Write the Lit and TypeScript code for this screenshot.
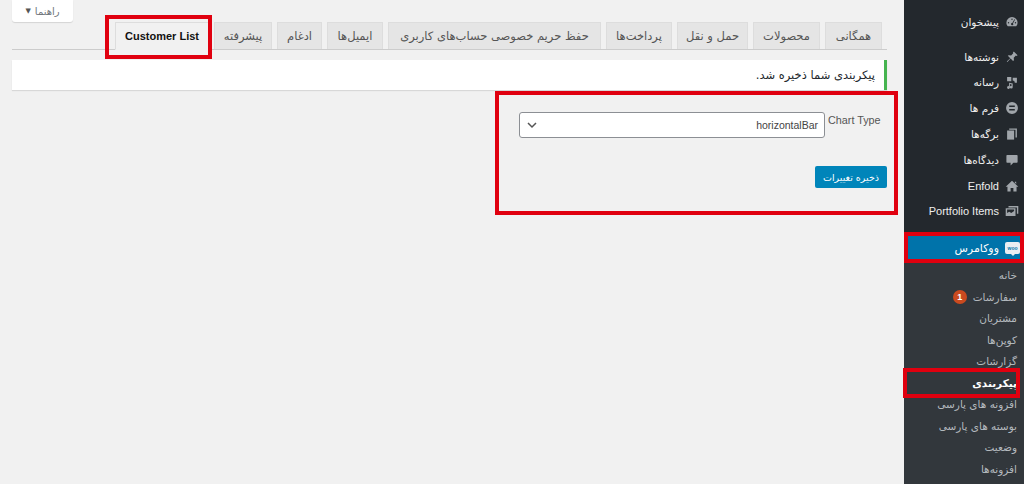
import { LitElement, html, css, svg } from "lit";
import { customElement } from "lit/decorators.js";

const icons: Record<string, unknown> = {
  gauge: svg`<path d="M10 3a8 8 0 0 0-8 8c0 2 .7 3.800 2 5h12a8 8 0 0 0 2-5 8 8 0 0 0-8-8zm0 2a1 1 0 1 1 0 2 1 1 0 0 1 0-2zM5 10a1 1 0 1 1 0 2 1 1 0 0 1 0-2zm10 0a1 1 0 1 1 0 2 1 1 0 0 1 0-2zm-1.500-4 .9.500-3 5.500a1.600 1.600 0 1 1-1-.5z"/>`,
  pin: svg`<path d="M12.500 2 18 7.500l-1.500 1-1-.5-3 3 .3 3.500-1.300 1.300L8 12.300l-4.500 5-1-1 5-4.500-3.500-3.500L5.300 7.500 8.800 7.800l3-3-.5-1z"/>`,
  media: svg`<path d="M3 3h6v6H3zM11 4h6v7h-3a3 3 0 0 0-3-3zM6 11l5 1v5.500a2 2 0 1 1-1.500-2V13.500L7 13v5a2 2 0 1 1-1.500-2z"/>`,
  form: svg`<path fill-rule="evenodd" d="M10 1.500a8.500 8.500 0 1 1 0 17 8.500 8.500 0 0 1 0-17zM6 6.500v2h8v-2zm0 5v2h8v-2z"/>`,
  pages: svg`<path d="M6 2h11v13h-2V4H6z"/><path d="M3 5h10v13H3z"/>`,
  comment: svg`<path d="M3 3h14a1 1 0 0 1 1 1v9a1 1 0 0 1-1 1h-5l-4 4v-4H3a1 1 0 0 1-1-1V4a1 1 0 0 1 1-1z"/>`,
  home: svg`<path d="M10 2.500 19 11h-2.500v7H12v-5H8v5H3.500v-7H1zM14 4h2v3l-2-2z"/>`,
  portfolio: svg`<path fill-rule="evenodd" d="M5 3h14v11h-2V5H5zM1 6h14v11H1zm2 2v5l3-2 3 2 4-3V8z"/>`,
};

const topMenu = [
  { label: "پیشخوان", icon: "gauge", cls: "first" },
  { label: "نوشته‌ها", icon: "pin", cls: "gap" },
  { label: "رسانه", icon: "media", cls: "" },
  { label: "فرم ها", icon: "form", cls: "" },
  { label: "برگه‌ها", icon: "pages", cls: "" },
  { label: "دیدگاه‌ها", icon: "comment", cls: "" },
  { label: "Enfold", icon: "home", cls: "" },
  { label: "Portfolio Items", icon: "portfolio", cls: "" },
];

const subMenu = [
  "خانه", "سفارشات", "مشتریان", "کوپن‌ها", "گزارشات", "پیکربندی",
  "افزونه های پارسی", "بوسته های پارسی", "وضعیت", "افزونه‌ها",
];

const tabs = [
  { t: "همگانی", w: 57 },
  { t: "محصولات", w: 67 },
  { t: "حمل و نقل", w: 71 },
  { t: "پرداخت‌ها", w: 66 },
  { t: "حفظ حریم خصوصی حساب‌های کاربری", w: 213 },
  { t: "ایمیل‌ها", w: 56 },
  { t: "ادغام", w: 45 },
  { t: "پیشرفته", w: 58 },
  { t: "Customer List", w: 94 },
];

@customElement("app-root")
export class AppRoot extends LitElement {
  static styles = css`
    :host { display: block; position: relative; width: 1024px; height: 484px; overflow: hidden; background: #f1f1f1; font-family: "DejaVu Sans", "Liberation Sans", sans-serif; }
    .page { display: grid; grid-template-columns: 1fr 120px; height: 484px; }
    .main { display: flex; flex-direction: column; padding: 0 17px 0 12px; min-width: 0; }
    .help-row { display: flex; height: 22px; }
    .help { width: 61px; height: 22px; box-sizing: border-box; background: #fff; border-radius: 0 0 3px 3px; box-shadow: 0 1px 1px rgba(0,0,0,.12); display: flex; align-items: center; justify-content: center; gap: 4px; font-size: 10px; color: #72777c; direction: ltr; }
    .tri { font-size: 7px; color: #555; }
    .tabs { display: flex; flex-direction: row-reverse; gap: 5px; height: 27px; padding-right: 5px; border-bottom: 1px solid #ccc; box-sizing: content-box; }
    .tab { height: 27px; box-sizing: border-box; flex: none; background: #e5e5e5; border: 1px solid #ddd; border-bottom: none; color: #555; font-size: 11.500px; display: flex; align-items: center; justify-content: center; direction: rtl; white-space: nowrap; }
    .tab.active { background: #f1f1f1; color: #111; height: 28px; margin-bottom: -1px; border-bottom: 1px solid #f1f1f1; font-family: "Liberation Sans", sans-serif; font-size: 11px; font-weight: 700; }
    .notice { margin-top: 10px; height: 30px; box-sizing: border-box; background: #fff; border-right: 3px solid #46b450; box-shadow: 0 1px 1px rgba(0,0,0,.1); display: flex; align-items: center; padding-right: 9px; direction: rtl; font-size: 11.500px; color: #23282d; }
    .field { display: flex; justify-content: flex-end; align-items: flex-start; margin-top: 22px; gap: 3px; }
    .label { width: 59px; padding-top: 1px; font-family: "Liberation Sans", sans-serif; font-size: 10.800px; color: #555; line-height: 14px; white-space: nowrap; }
    .select { width: 306px; height: 26px; box-sizing: border-box; background: #fff; border: 1px solid #8c8f94; border-radius: 3px; display: flex; align-items: center; justify-content: space-between; padding: 0 6px 0 7px; font-family: "Liberation Sans", sans-serif; font-size: 10.500px; color: #444; }
    .chev { width: 10px; height: 10px; fill: none; stroke: #555; stroke-width: 1.500; }
    .actions { display: flex; justify-content: flex-end; margin-top: 28px; }
    .save { width: 72px; height: 22px; background: #0085ba; border-radius: 2px; color: #fff; font-size: 9.500px; display: flex; align-items: center; justify-content: center; direction: rtl; }
    .side { background: #23282d; color: #eee; display: flex; flex-direction: column; }
    .item { height: 25.800px; display: flex; align-items: center; justify-content: flex-end; gap: 6px; padding-right: 5px; font-size: 10.500px; color: #eee; white-space: nowrap; }
    .item.first { margin-top: 9px; }
    .item.gap { margin-top: 9px; }
    .item svg { width: 14px; height: 14px; fill: #a0a5aa; flex: none; }
    .item.lat { font-family: "Liberation Sans", sans-serif; font-size: 11px; }
    .woo { margin-top: 12px; height: 24px; background: #0073aa; color: #fff; display: flex; align-items: center; justify-content: flex-end; gap: 6px; padding-right: 4px; font-size: 11px; position: relative; }
    .woo::before { content: ""; position: absolute; left: 0; top: 8px; border: 4px solid transparent; border-left-color: #f1f1f1; }
    .woo-ic { width: 15px; height: 12px; background: #e8eef2; border-radius: 2px; color: #0073aa; font: 700 5px "Liberation Sans", sans-serif; display: flex; align-items: center; justify-content: center; position: relative; }
    .woo-ic::after { content: ""; position: absolute; bottom: -2px; left: 6px; border: 2px solid transparent; border-top-color: #e8eef2; border-bottom: 0; }
    .sub { flex: 1; background: #32373c; padding-top: 4px; display: flex; flex-direction: column; }
    .sub-item { height: 21.500px; display: flex; align-items: center; justify-content: flex-end; padding-right: 7px; gap: 6px; font-size: 10.500px; color: #b4b9be; direction: ltr; white-space: nowrap; }
    .sub-item.cur { color: #fff; font-weight: 700; }
    .badge { width: 14px; height: 14px; border-radius: 50%; background: #ca4a1f; color: #fff; font: 700 9px/14px "Liberation Sans", sans-serif; text-align: center; }
    .mark { position: absolute; box-sizing: border-box; border: 4px solid #e0000f; pointer-events: none; }
    .m1 { left: 105px; top: 15px; width: 107px; height: 44px; }
    .m2 { left: 495px; top: 91px; width: 403px; height: 124px; }
    .m3 { left: 904px; top: 232px; width: 120px; height: 31px; }
    .m4 { left: 903px; top: 368px; width: 117px; height: 30px; }
  `;

  render() {
    return html`
      <div class="page">
        <div class="main">
          <div class="help-row">
            <div class="help"><span class="tri">▼</span><span>راهنما</span></div>
          </div>
          <div class="tabs">
            ${tabs.map((t, i) => html`<div class="tab ${i === tabs.length - 1 ? "active" : ""}" style="width:${t.w}px">${t.t}</div>`)}
          </div>
          <div class="notice">پیکربندی شما ذخیره شد.</div>
          <div class="field">
            <div class="select">
              <svg class="chev" viewBox="0 0 10 10"><path d="M1 3l4 4 4-4"/></svg>
              <span>horizontalBar</span>
            </div>
            <div class="label">Chart Type</div>
          </div>
          <div class="actions"><div class="save">ذخیره تغییرات</div></div>
        </div>
        <div class="side">
          ${topMenu.map((m) => html`
            <div class="item ${m.cls} ${/[A-Z]/.test(m.label) ? "lat" : ""}">
              <span>${m.label}</span>
              <svg viewBox="0 0 20 20">${icons[m.icon]}</svg>
            </div>`)}
          <div class="woo"><span>ووکامرس</span><div class="woo-ic">woo</div></div>
          <div class="sub">
            ${subMenu.map((s, i) => html`
              <div class="sub-item ${i === 5 ? "cur" : ""}">
                ${i === 1 ? html`<span class="badge">1</span>` : ""}
                <span>${s}</span>
              </div>`)}
          </div>
        </div>
      </div>
      <div class="mark m1"></div>
      <div class="mark m2"></div>
      <div class="mark m3"></div>
      <div class="mark m4"></div>
    `;
  }
}
